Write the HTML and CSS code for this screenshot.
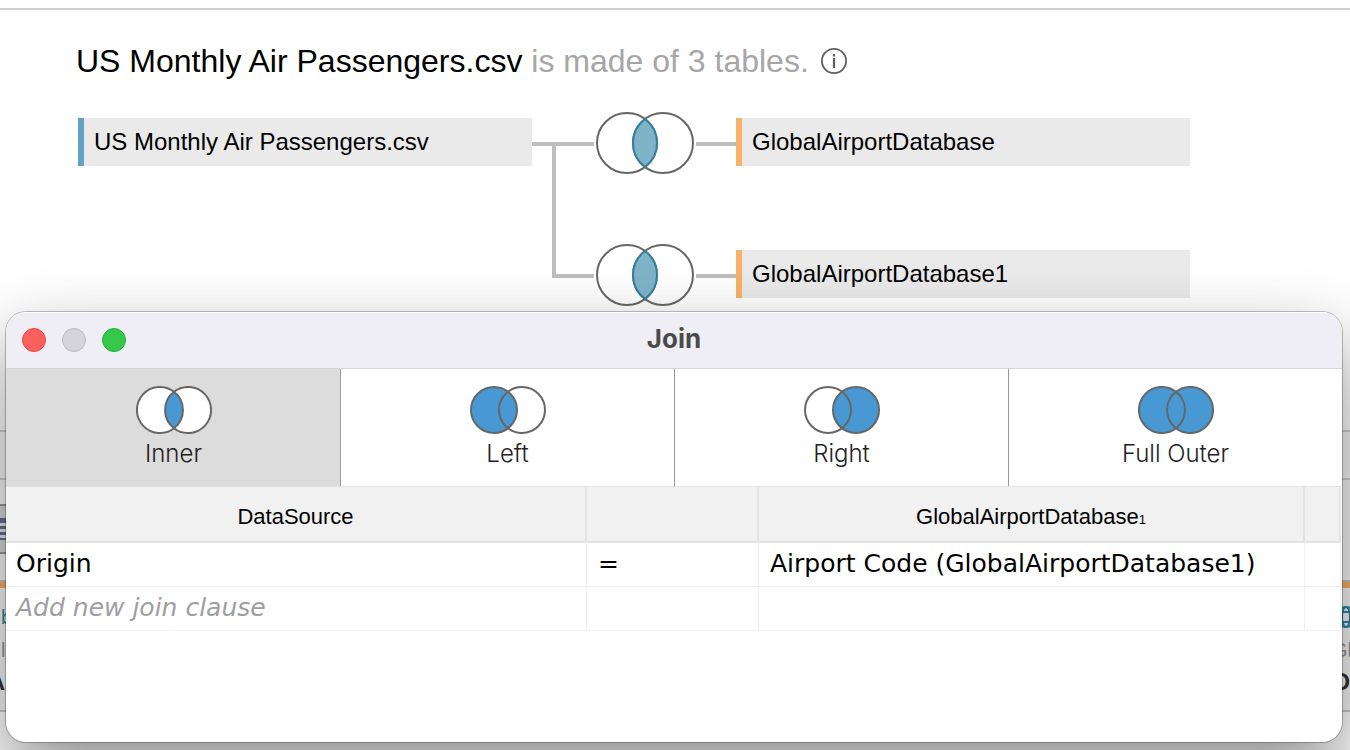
FILE: index.html
```
<!DOCTYPE html>
<html lang="en">
<head>
<meta charset="utf-8">
<meta name="viewport" content="width=device-width, initial-scale=1">
<title>US Monthly Air Passengers.csv</title>
<link rel="stylesheet" href="styles.css">
</head>
<body>
<main class="workspace">
  <section class="canvas">
    <header class="canvas-head">
      <h1 class="title">US Monthly Air Passengers.csv <span class="title-note">is made of 3 tables.</span></h1>
      <button class="info" type="button" aria-label="About this data source">
        <svg width="26" height="26" viewBox="0 0 26 26" fill="none" stroke="#5e5e5e">
          <circle cx="13" cy="13" r="12.1" stroke-width="1.8"/>
          <path d="M13 10v10M13 6v2.4" stroke-width="2.2"/>
        </svg>
      </button>
    </header>
    <div class="model">
      <div class="node node-primary">US Monthly Air Passengers.csv</div>
      <svg class="links" width="204" height="194" viewBox="0 0 204 194" role="img" aria-label="Inner joins">
        <g fill="none" stroke="#bfbfbf" stroke-width="4">
          <path d="M0 32H62M164 32H204M22 32V164H62M164 164H204"/>
        </g>
        <g id="join">
          <g fill="none" stroke="#666" stroke-width="2">
            <circle cx="95" cy="31" r="30"/>
            <circle cx="131" cy="31" r="30"/>
          </g>
          <path d="M113 7A30 30 0 0 1 113 55A30 30 0 0 1 113 7Z" fill="#7fb3c8" stroke="#34809f" stroke-width="2"/>
        </g>
        <use href="#join" y="132"/>
      </svg>
      <div class="joined">
        <div class="node">GlobalAirportDatabase</div>
        <div class="node">GlobalAirportDatabase1</div>
      </div>
    </div>
  </section>
  <div class="toolbar"></div>
  <section class="grid">
    <div class="field field-left">
      <div class="grid-tools">
        <svg width="22" height="22" viewBox="0 0 22 22"><path d="M0 0H22V22H0Z" fill="#63708c"/><path d="M0 5H20V8H0ZM0 11H20V14H0ZM0 17H20V20H0Z" fill="#e6e6e6"/></svg>
      </div>
      <div class="field-bar"></div>
      <div class="field-type">b</div>
      <div class="field-table">l</div>
      <div class="field-name">A</div>
    </div>
    <div class="field field-right">
      <div class="grid-gap"></div>
      <div class="field-bar"></div>
      <div class="field-type">
        <svg width="22" height="22" viewBox="0 0 22 22" fill="none" stroke="#2f87a6" stroke-width="2"><circle cx="11" cy="11" r="10"/><ellipse cx="11" cy="11" rx="4" ry="10"/><path d="M2 6H20M2 16H20"/></svg>
      </div>
      <div class="field-table">Gl</div>
      <div class="field-name">D</div>
    </div>
  </section>
</main>

<div class="dialog" role="dialog" aria-labelledby="dialog-title">
  <header class="titlebar">
    <div class="lights">
      <button class="light light-close" type="button" aria-label="Close"></button>
      <button class="light light-min" type="button" aria-label="Minimize" disabled></button>
      <button class="light light-zoom" type="button" aria-label="Zoom"></button>
    </div>
    <h2 class="dialog-title" id="dialog-title">Join</h2>
  </header>
  <div class="tabs" role="tablist">
    <button class="tab tab-active" type="button" role="tab" aria-selected="true">
      <svg width="76" height="48" viewBox="0 0 76 48" stroke="#666" stroke-width="2">
        <path d="M38 5.8A23 23 0 1 0 38 42.2A23 23 0 1 0 38 5.8Z" fill="#fff"/>
        <path d="M38 5.8A23 23 0 0 1 38 42.2A23 23 0 0 1 38 5.8Z" fill="#4898d3"/>
      </svg>
      Inner
    </button>
    <button class="tab" type="button" role="tab" aria-selected="false">
      <svg width="76" height="48" viewBox="0 0 76 48" stroke="#666" stroke-width="2">
        <circle cx="24" cy="24" r="23" fill="#4898d3"/><circle cx="52" cy="24" r="23" fill="none"/>
      </svg>
      Left
    </button>
    <button class="tab" type="button" role="tab" aria-selected="false">
      <svg width="76" height="48" viewBox="0 0 76 48" stroke="#666" stroke-width="2">
        <circle cx="52" cy="24" r="23" fill="#4898d3"/><circle cx="24" cy="24" r="23" fill="none"/>
      </svg>
      Right
    </button>
    <button class="tab" type="button" role="tab" aria-selected="false">
      <svg width="76" height="48" viewBox="0 0 76 48" stroke="#666" stroke-width="2">
        <path d="M38 5.8A23 23 0 1 0 38 42.2A23 23 0 1 0 38 5.8Z" fill="#4898d3"/>
        <path d="M38 5.8A23 23 0 0 1 38 42.2A23 23 0 0 1 38 5.8Z" fill="#4898d3"/>
      </svg>
      Full Outer
    </button>
  </div>
  <table class="clauses">
    <colgroup><col><col class="col-op"><col class="col-right"><col class="col-end"></colgroup>
    <thead>
      <tr><th scope="col">DataSource</th><th></th><th scope="col">GlobalAirportDatabase<span class="suffix">1</span></th><th></th></tr>
    </thead>
    <tbody>
      <tr><td>Origin</td><td>=</td><td>Airport Code (GlobalAirportDatabase1)</td><td></td></tr>
      <tr><td><button class="add" type="button">Add new join clause</button></td><td></td><td></td><td></td></tr>
    </tbody>
  </table>
</div>
</body>
</html>
```
FILE: styles.css
```
* { box-sizing: border-box; }

body {
  margin: 0;
  height: 100vh;
  overflow: hidden;
  position: relative;
  background: #fff;
  color: #000;
  font-family: "Liberation Sans", Arial, sans-serif;
}

button {
  margin: 0;
  padding: 0;
  border: 0;
  background: none;
  color: inherit;
  font: inherit;
}

svg { display: block; }

/* Data source canvas */
.workspace { padding-top: 8px; }

.canvas {
  height: 424px;
  padding: 32px 76px 0;
  border-top: 2px solid #d0d0d0;
  border-bottom: 2px solid #d0d0d0;
}

.canvas-head {
  display: flex;
  align-items: center;
  gap: 12px;
  height: 38px;
}

.title {
  margin: 0;
  font-size: 32px;
  font-weight: 400;
  line-height: 38px;
}

.title-note { color: #a6a6a6; }

.model {
  display: flex;
  align-items: flex-start;
  padding: 38px 0 0 2px;
}

.node {
  width: 454px;
  height: 48px;
  padding-left: 10px;
  border-left: 6px solid #fab068;
  background: #eaeaea;
  font-size: 24px;
  line-height: 48px;
}

.node-primary { border-left-color: #62a3c5; }

.links { margin-top: -6px; }

.joined {
  display: flex;
  flex-direction: column;
  gap: 84px;
}

/* Data grid behind the dialog */
.toolbar {
  height: 48px;
  border-bottom: 2px solid #d0d0d0;
  background: #f8f8f8;
}

.grid {
  display: flex;
  justify-content: space-between;
  height: 232px;
  border-bottom: 2px solid #c8c8c8;
  background: #f8f8f8;
}

.field-left { width: 8px; }
.field-right { width: 18px; }

.grid-tools {
  display: flex;
  align-items: center;
  justify-content: flex-end;
  height: 50px;
  margin: 24px 0 26px;
  border-top: 2px solid #9a9a9a;
  border-bottom: 2px solid #9a9a9a;
  background: #d8d8d8;
}

.grid-tools svg { flex: none; }

.grid-gap { height: 100px; }

.field-bar {
  height: 8px;
  border-top: 2px solid #c0c0c0;
  background: #fab068;
}

.field-type {
  height: 44px;
  padding: 18px 0 0 1px;
  color: #2f87a6;
  font-size: 20px;
  line-height: 22px;
}

.field-right .field-type { padding-left: 3px; }

.field-table {
  height: 36px;
  padding-left: 1px;
  color: #949494;
  font-size: 20px;
  line-height: 36px;
}

.field-right .field-table { padding-left: 0; }

.field-name {
  display: flex;
  justify-content: flex-end;
  padding-right: 3px;
  color: #333;
  font-size: 24px;
  font-weight: 700;
  line-height: 28px;
}

.field-right .field-name { padding-right: 0; }

/* Join dialog */
.dialog {
  position: absolute;
  inset: 312px 8px 8px 6px;
  overflow: hidden;
  border-radius: 20px;
  background: #fff;
  box-shadow: 0 0 0 1px rgba(0, 0, 0, .24), 0 30px 70px rgba(0, 0, 0, .45);
}

.titlebar {
  display: grid;
  grid-template-columns: 1fr auto 1fr;
  align-items: center;
  height: 57px;
  padding: 0 16px;
  border-bottom: 1px solid #d5d5da;
  background: #efeef4;
  box-shadow: inset 0 1px #fff;
}

.lights {
  display: flex;
  gap: 16px;
}

.light {
  width: 24px;
  height: 24px;
  border: 1px solid #e24b45;
  border-radius: 50%;
  background: #fd605c;
}

.light-min { border-color: #b9b8bd; background: #d5d4da; }
.light-zoom { border-color: #2aac3a; background: #35c84a; }

.dialog-title {
  margin: 0;
  padding-bottom: 2px;
  color: #4a4a4c;
  font-family: Inter, "Liberation Sans", sans-serif;
  font-size: 26px;
  font-weight: 700;
  line-height: 32px;
}

.tabs {
  display: grid;
  grid-template-columns: repeat(4, 1fr);
}

.tab {
  display: flex;
  flex-direction: column;
  align-items: center;
  gap: 4px;
  height: 117px;
  padding-top: 17px;
  border-left: 1px solid #999;
  color: #222;
  font-family: Inter, "Liberation Sans", sans-serif;
  font-size: 24px;
  font-weight: 300;
  line-height: 32px;
}

.tab:first-child { border-left-color: transparent; }
.tab-active { background: #dcdcdc; }

.clauses {
  width: calc(100% - 1px);
  border-collapse: separate;
  border-spacing: 0;
  table-layout: fixed;
  font-family: "DejaVu Sans", sans-serif;
  font-size: 25px;
  line-height: 36px;
}

.col-op { width: 172px; }
.col-right { width: 546px; }
.col-end { width: 36px; }

.clauses th {
  height: 57px;
  padding: 6px 0 0;
  border: solid #e3e3e3;
  border-width: 1px 2px 2px 0;
  background: #f1f1f1;
  font-family: "Liberation Sans", Arial, sans-serif;
  font-size: 22px;
  font-weight: 400;
}

.suffix {
  font-size: 13px;
  line-height: 1;
}

.clauses td {
  height: 44px;
  padding: 0 11px 2px;
  border: solid #efefef;
  border-width: 0 1px 1px 0;
  white-space: nowrap;
}

.clauses td:first-child { padding-left: 10px; }

.add {
  display: block;
  color: #9e9ea2;
  font-style: italic;
}
```
